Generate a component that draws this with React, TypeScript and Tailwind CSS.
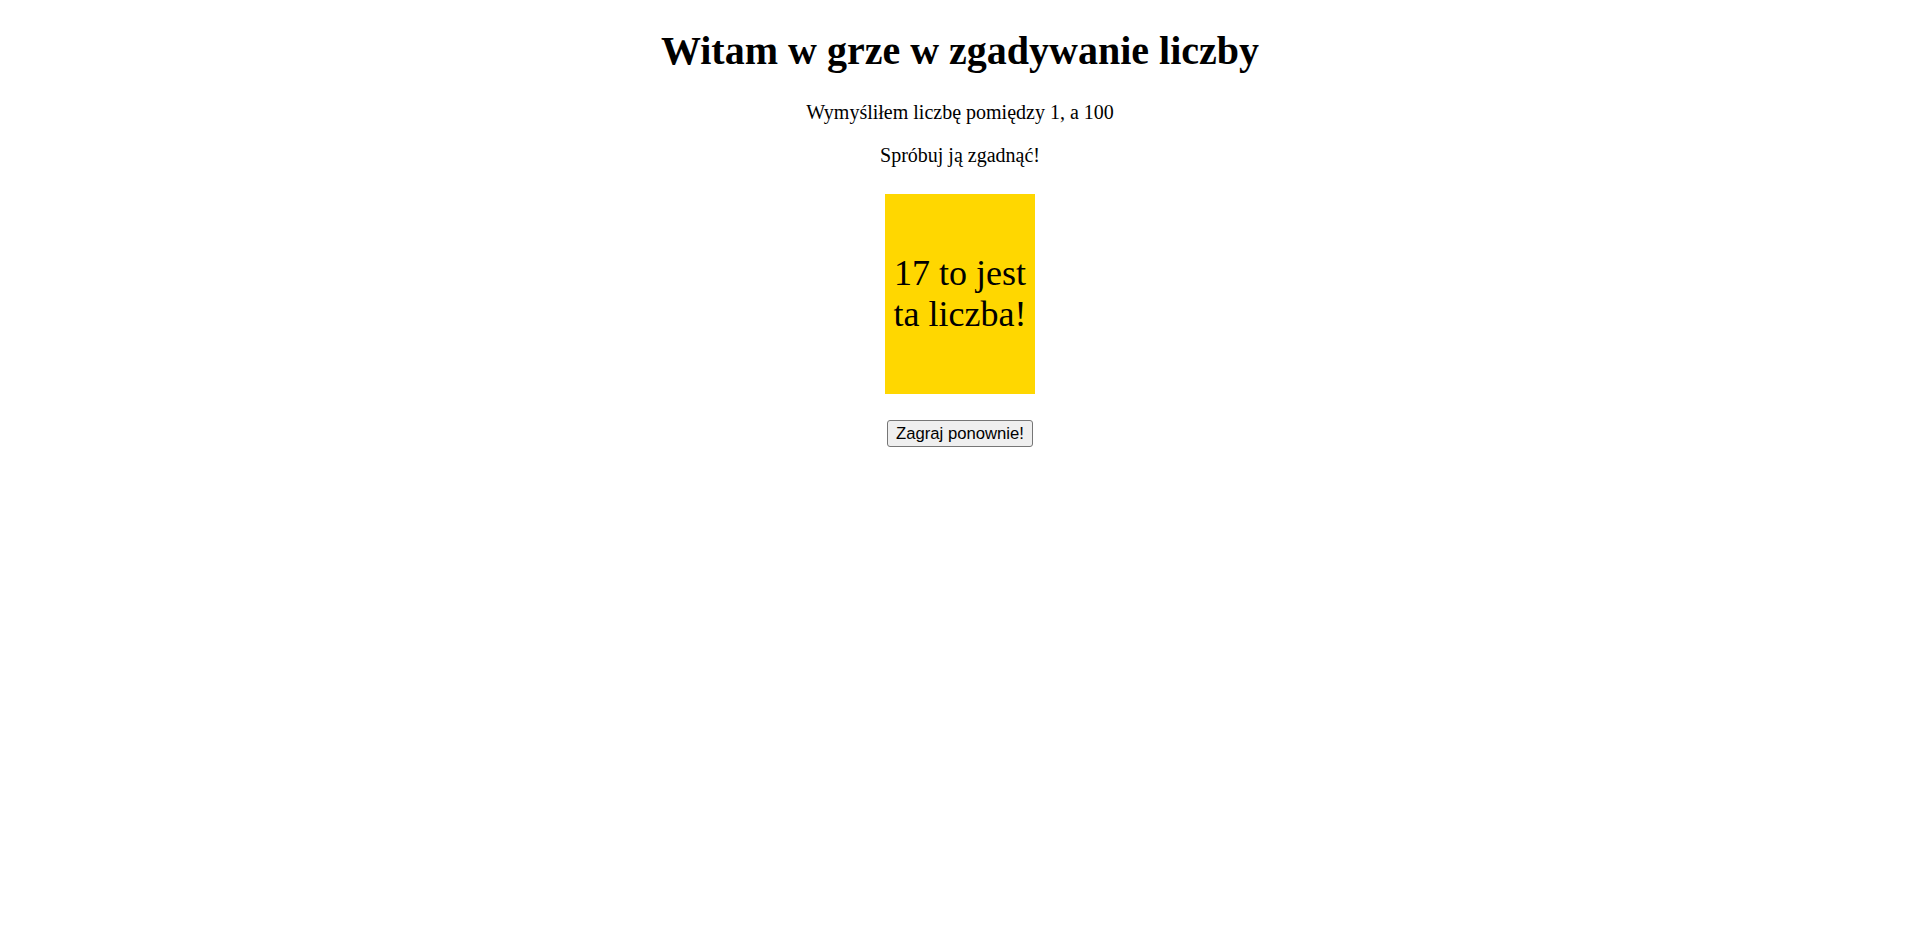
export default function App() {
  return (
    <div className="flex min-h-[934px] flex-col items-center bg-white px-[10px] text-black">
      <h1 className="mt-[28px] text-center font-['Liberation_Serif',serif] text-[40px] font-bold leading-[46px]">
        Witam w grze w zgadywanie liczby
      </h1>
      <p className="mt-[27px] text-center font-['Liberation_Serif',serif] text-[20px] leading-[23px]">
        Wymyśliłem liczbę pomiędzy 1, a 100
      </p>
      <p className="mt-[20px] text-center font-['Liberation_Serif',serif] text-[20px] leading-[23px]">
        Spróbuj ją zgadnąć!
      </p>
      <div className="mt-[27px] flex h-[200px] w-[150px] items-center justify-center bg-[#ffd700] text-center font-['Liberation_Serif',serif] text-[36px] leading-[41px]">
        17 to jest ta liczba!
      </div>
      <button
        type="button"
        className="mt-[26px] h-[27px] rounded-[3px] border border-[#767676] bg-[#efefef] px-[8.5px] font-['Liberation_Sans',sans-serif] text-[16.67px] leading-[19px] text-black"
      >
        Zagraj ponownie!
      </button>
    </div>
  );
}
